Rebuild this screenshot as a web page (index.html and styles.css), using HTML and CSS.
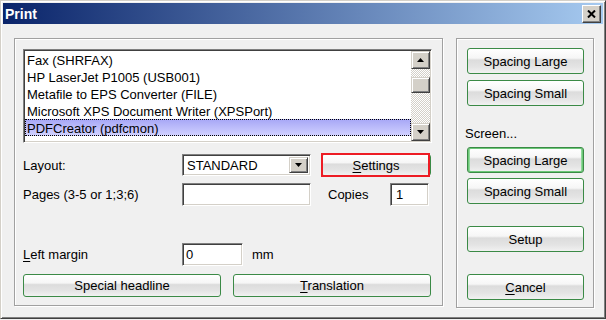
FILE: index.html
```html
<!DOCTYPE html>
<html>
<head>
<meta charset="utf-8">
<title>Print</title>
<link rel="stylesheet" href="styles.css">
</head>
<body>
<div class="window">
  <div class="titlebar">
    <span class="title">Print</span>
    <button class="close" aria-label="Close">
      <svg width="9" height="8" viewBox="0 0 9 8"><path d="M1 0.5 L8 7.5 M8 0.5 L1 7.5" stroke="#000" stroke-width="2" fill="none"/></svg>
    </button>
  </div>
  <div class="client">
    <div class="group left-group">
      <div class="listbox">
        <div class="items">
          <div class="item">Fax (SHRFAX)</div>
          <div class="item">HP LaserJet P1005 (USB001)</div>
          <div class="item">Metafile to EPS Converter (FILE)</div>
          <div class="item">Microsoft XPS Document Writer (XPSPort)</div>
          <div class="item sel">PDFCreator (pdfcmon)</div>
          <div class="item">\\NBINN057\HP LaserJet P1005 (USB003)</div>
        </div>
        <div class="scrollbar">
          <div class="raised sb-btn"><svg width="7" height="4" viewBox="0 0 7 4"><polygon points="3.5,0 7,4 0,4" fill="#000"/></svg></div>
          <div class="track track-top"></div>
          <div class="raised thumb"></div>
          <div class="track track-rest"></div>
          <div class="raised sb-btn"><svg width="7" height="4" viewBox="0 0 7 4"><polygon points="0,0 7,0 3.5,4" fill="#000"/></svg></div>
        </div>
      </div>

      <div class="row row-layout">
        <span class="lbl">Layout:</span>
        <div class="sunken combo">
          <span class="combo-text">STANDARD</span>
          <div class="raised combo-btn"><svg width="7" height="4" viewBox="0 0 7 4"><polygon points="0,0 7,0 3.5,4" fill="#000"/></svg></div>
        </div>
        <div class="settings-wrap">
          <button class="btn settings-btn"><span><u>S</u>ettings</span></button>
          <div class="mark"></div>
        </div>
      </div>

      <div class="row row-pages">
        <span class="lbl">Pages (3-5 or 1;3;6)</span>
        <div class="sunken field pages-field"></div>
        <span class="copies-lbl">Copies</span>
        <div class="sunken field copies-field">1</div>
      </div>

      <div class="row row-margin">
        <span class="lbl"><u>L</u>eft margin</span>
        <div class="sunken field margin-field">0</div>
        <span class="unit">mm</span>
      </div>

      <div class="row row-buttons">
        <button class="btn wide-btn">Special headline</button>
        <button class="btn wide-btn"><span><u>T</u>ranslation</span></button>
      </div>
    </div>

    <div class="group right-group">
      <button class="btn side-btn">Spacing Large</button>
      <button class="btn side-btn gap-s">Spacing Small</button>
      <div class="screen-lbl">Screen...</div>
      <button class="btn side-btn focused">Spacing Large</button>
      <button class="btn side-btn gap-xs">Spacing Small</button>
      <button class="btn side-btn gap-l">Setup</button>
      <button class="btn side-btn gap-l"><span><u>C</u>ancel</span></button>
    </div>
  </div>
</div>
</body>
</html>
```
FILE: styles.css
```css
* { box-sizing: border-box; }
html, body { margin: 0; padding: 0; }
body {
  width: 606px;
  height: 320px;
  overflow: hidden;
  background: #f0f0f0;
  font: 13px "Liberation Sans", Arial, sans-serif;
  color: #000;
}
u { text-decoration: underline; text-underline-offset: 2px; }

.window {
  width: 606px;
  height: 319px;
  border: 1px solid;
  border-color: #d4d0c8 #404040 #404040 #d4d0c8;
  box-shadow: inset 1px 1px #fff, inset -1px -1px #808080;
  padding: 2px;
  background: #f0f0f0;
  display: flex;
  flex-direction: column;
}

.titlebar {
  height: 21px;
  flex: none;
  display: flex;
  align-items: center;
  justify-content: space-between;
  padding: 0 2px 0 2px;
  background: linear-gradient(to right, #0a246a, #a6caf0);
}
.title {
  color: #fff;
  font-weight: bold;
  font-size: 14px;
  letter-spacing: 0;
}
.close {
  width: 19px;
  height: 18px;
  padding: 0;
  margin: 0;
  display: flex;
  align-items: center;
  justify-content: center;
  background: #d4d0c8;
  border: 1px solid;
  border-color: #fff #404040 #404040 #fff;
  box-shadow: inset -1px -1px #808080;
}

.client {
  flex: 1;
  display: flex;
  align-items: flex-start;
  padding: 14px 0 0 11px;
}

.group {
  border: 1px solid #a0a0a0;
  box-shadow: inset 1px 1px #fff, 1px 1px #fff;
}
.left-group {
  width: 429px;
  height: 268px;
  padding: 10px 0 0 8px;
}
.right-group {
  width: 138px;
  height: 270px;
  margin-left: 13px;
  padding: 9px 0 0 10px;
  display: flex;
  flex-direction: column;
}

.raised {
  background: #d4d0c8;
  border: 1px solid;
  border-color: #d4d0c8 #404040 #404040 #d4d0c8;
  box-shadow: inset 1px 1px #fff, inset -1px -1px #808080;
}
.sunken {
  background: #fff;
  border: 1px solid;
  border-color: #808080 #fff #fff #808080;
  box-shadow: inset 1px 1px #404040, inset -1px -1px #d4d0c8;
}

/* list box */
.listbox {
  width: 409px;
  height: 94px;
  display: flex;
  padding: 1px;
  background: #fff;
  border: 1px solid;
  border-color: #808080 #fff #fff #808080;
  box-shadow: inset 1px 1px #404040, inset -1px -1px #d4d0c8;
}
.items {
  flex: 1;
  overflow: hidden;
  background: #fff;
}
.item {
  height: 17px;
  line-height: 17px;
  padding: 1px 0 0 2px;
  white-space: nowrap;
}
.item.sel {
  background: linear-gradient(to bottom, #a6a6f6, #d2d2ff);
  outline: 1px dotted #000;
  outline-offset: -1px;
}
.scrollbar {
  width: 19px;
  display: flex;
  flex-direction: column;
}
.sb-btn {
  height: 18px;
  flex: none;
  display: flex;
  align-items: center;
  justify-content: center;
}
.track {
  background: repeating-conic-gradient(#d4d0c8 0 25%, #fff 0 50%) 0 0 / 2px 2px;
}
.track-top { height: 8px; flex: none; }
.track-rest { flex: 1; }
.thumb { height: 16px; flex: none; }

/* rows */
.row {
  display: flex;
  align-items: center;
}
.lbl { width: 159px; flex: none; }
.row-layout { margin-top: 10px; height: 24px; }
.row-pages { margin-top: 6px; height: 23px; }
.row-margin { margin-top: 37px; height: 23px; }
.row-buttons { margin-top: 8px; height: 23px; gap: 12px; }

.combo {
  width: 129px;
  height: 22px;
  padding: 2px;
  display: flex;
  align-items: stretch;
}
.combo-text {
  flex: 1;
  padding-left: 2px;
  line-height: 18px;
}
.combo-btn {
  width: 19px;
  display: flex;
  align-items: center;
  justify-content: center;
}

.field {
  height: 23px;
  padding: 0 3px;
  line-height: 21px;
}
.pages-field { width: 129px; }
.copies-lbl { width: 62px; margin-left: 17px; }
.copies-field { width: 39px; padding-left: 5px; }
.margin-field { width: 61px; }
.unit { margin-left: 9px; }

/* buttons */
.btn {
  font: inherit;
  color: #000;
  padding: 0;
  margin: 0;
  display: flex;
  align-items: center;
  justify-content: center;
  border: 1px solid #3b8a46;
  border-radius: 3px;
  background: linear-gradient(to bottom, #ffffff 0%, #f6f6f6 38%, #dcdcdc 46%, #e4e4e4 75%, #f1f1f1 100%);
}
.wide-btn { width: 198px; height: 23px; }

.settings-wrap {
  position: relative;
  width: 110px;
  height: 24px;
  margin-left: 10px;
  padding: 1px 0;
}
.settings-btn { width: 110px; height: 22px; }
.mark {
  position: absolute;
  left: 0;
  top: 0;
  width: 109px;
  height: 24px;
  border: 2px solid #ed1c24;
}

.side-btn { width: 117px; height: 26px; flex: none; }
.gap-s { margin-top: 6px; }
.gap-xs { margin-top: 5px; }
.gap-l { margin-top: 22px; }
.focused {
  box-shadow: inset 0 0 0 1px #6cc878, inset 2px 0 0 #8fd99a, inset -2px 0 0 #8fd99a;
}
.screen-lbl {
  margin-top: 20px;
  height: 15px;
  line-height: 15px;
  margin-left: -2px;
  margin-bottom: 6px;
}
```
